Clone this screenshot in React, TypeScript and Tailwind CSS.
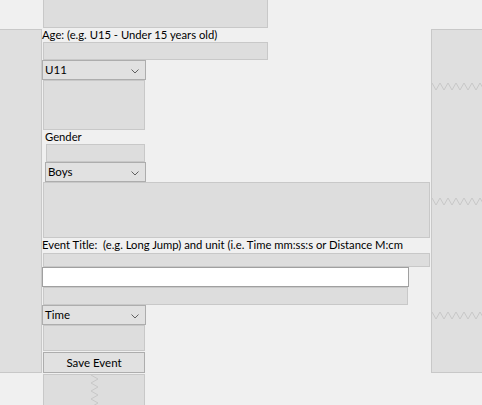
import React from "react";

const font = { fontFamily: 'Lato, "Noto Sans", sans-serif' };

function Chevron() {
  return (
    <svg width="8" height="5" viewBox="0 0 8 5" className="absolute right-[6px] top-[8px]">
      <polyline points="0.5,0.5 4,4 7.5,0.5" fill="none" stroke="#606060" strokeWidth="1" />
    </svg>
  );
}

function Combo({ text, className }: { text: string; className: string }) {
  return (
    <div className={"relative h-[20px] border border-[#adadad] bg-[#e1e1e1] pl-[2px] text-[11.5px] leading-[18px] text-black " + className}>
      {text}
      <Chevron />
    </div>
  );
}

function HZig({ top }: { top: string }) {
  return (
    <svg className={"absolute left-0 " + top} width="52" height="9" viewBox="0 0 52 9">
      <polyline
        points="0,1 4,8 8,1 12,8 16,1 20,8 24,1 28,8 32,1 36,8 40,1 44,8 48,1 52,8"
        fill="none"
        stroke="#c8c8c8"
        strokeWidth="1"
      />
    </svg>
  );
}

export default function App() {
  return (
    <div className="relative h-[405px] w-[482px] overflow-hidden bg-[#f0f0f0] text-black" style={font}>
      <div className="flex">
        {/* left panel */}
        <div className="w-[42px] shrink-0 pt-[29px]">
          <div className="h-[344px] border-y border-r border-[#c8c8c8] bg-[#dfdfdf]" />
        </div>

        {/* center column */}
        <div className="flex w-[389px] shrink-0 flex-col text-[11.25px]">
          <div className="ml-[1px] h-[28px] w-[225px] border-x border-b border-[#c8c8c8] bg-[#dddddd]" />
          <div className="h-[14px] whitespace-nowrap leading-[14px]">Age: (e.g. U15 - Under 15 years old)</div>
          <div className="ml-[1px] h-[18px] w-[225px] border border-[#c8c8c8] bg-[#dddddd]" />
          <Combo text="U11" className="w-[104px]" />
          <div className="ml-[1px] h-[50px] w-[102px] border border-[#c8c8c8] bg-[#dddddd]" />
          <div className="ml-[3px] h-[14px] leading-[14px]">Gender</div>
          <div className="ml-[4px] h-[18px] w-[99px] border border-[#c8c8c8] bg-[#dddddd]" />
          <Combo text="Boys" className="ml-[3px] w-[101px]" />
          <div className="ml-[1px] h-[56px] w-[387px] border border-[#c8c8c8] bg-[#dddddd]" />
          <div className="h-[15px] whitespace-pre leading-[14px]">
            {"Event Title:  (e.g. Long Jump) and unit (i.e. Time mm:ss:s or Distance M:cm"}
          </div>
          <div className="ml-[1px] h-[14px] w-[387px] border border-[#c8c8c8] bg-[#dddddd]" />
          <div className="h-[20px] w-[367px] border border-[#a0a0a0] bg-white" />
          <div className="ml-[1px] h-[18px] w-[365px] border border-[#c8c8c8] bg-[#dddddd]" />
          <Combo text="Time" className="w-[104px]" />
          <div className="ml-[1px] h-[26px] w-[102px] border border-[#c8c8c8] bg-[#dddddd]" />
          <div className="ml-[1px] mt-[1px] flex h-[21px] w-[102px] items-center justify-center border border-[#adadad] bg-[#e1e1e1] text-[11.5px]">
            Save Event
          </div>
          <div className="relative ml-[1px] mt-[1px] h-[40px] w-[102px] border border-[#c8c8c8] bg-[#dddddd]">
            <svg className="absolute left-[46px] top-[0px]" width="9" height="40" viewBox="0 0 9 40">
              <polyline
                points="1,0 8,4 1,8 8,12 1,16 8,20 1,24 8,28 1,32 8,36 1,40"
                fill="none"
                stroke="#c8c8c8"
                strokeWidth="1"
              />
            </svg>
          </div>
        </div>

        {/* right panel */}
        <div className="flex-1 pt-[29px]">
          <div className="relative h-[344px] border-y border-l border-[#c8c8c8] bg-[#dfdfdf]">
            <HZig top="top-[52px]" />
            <HZig top="top-[167px]" />
            <HZig top="top-[281px]" />
          </div>
        </div>
      </div>
    </div>
  );
}
